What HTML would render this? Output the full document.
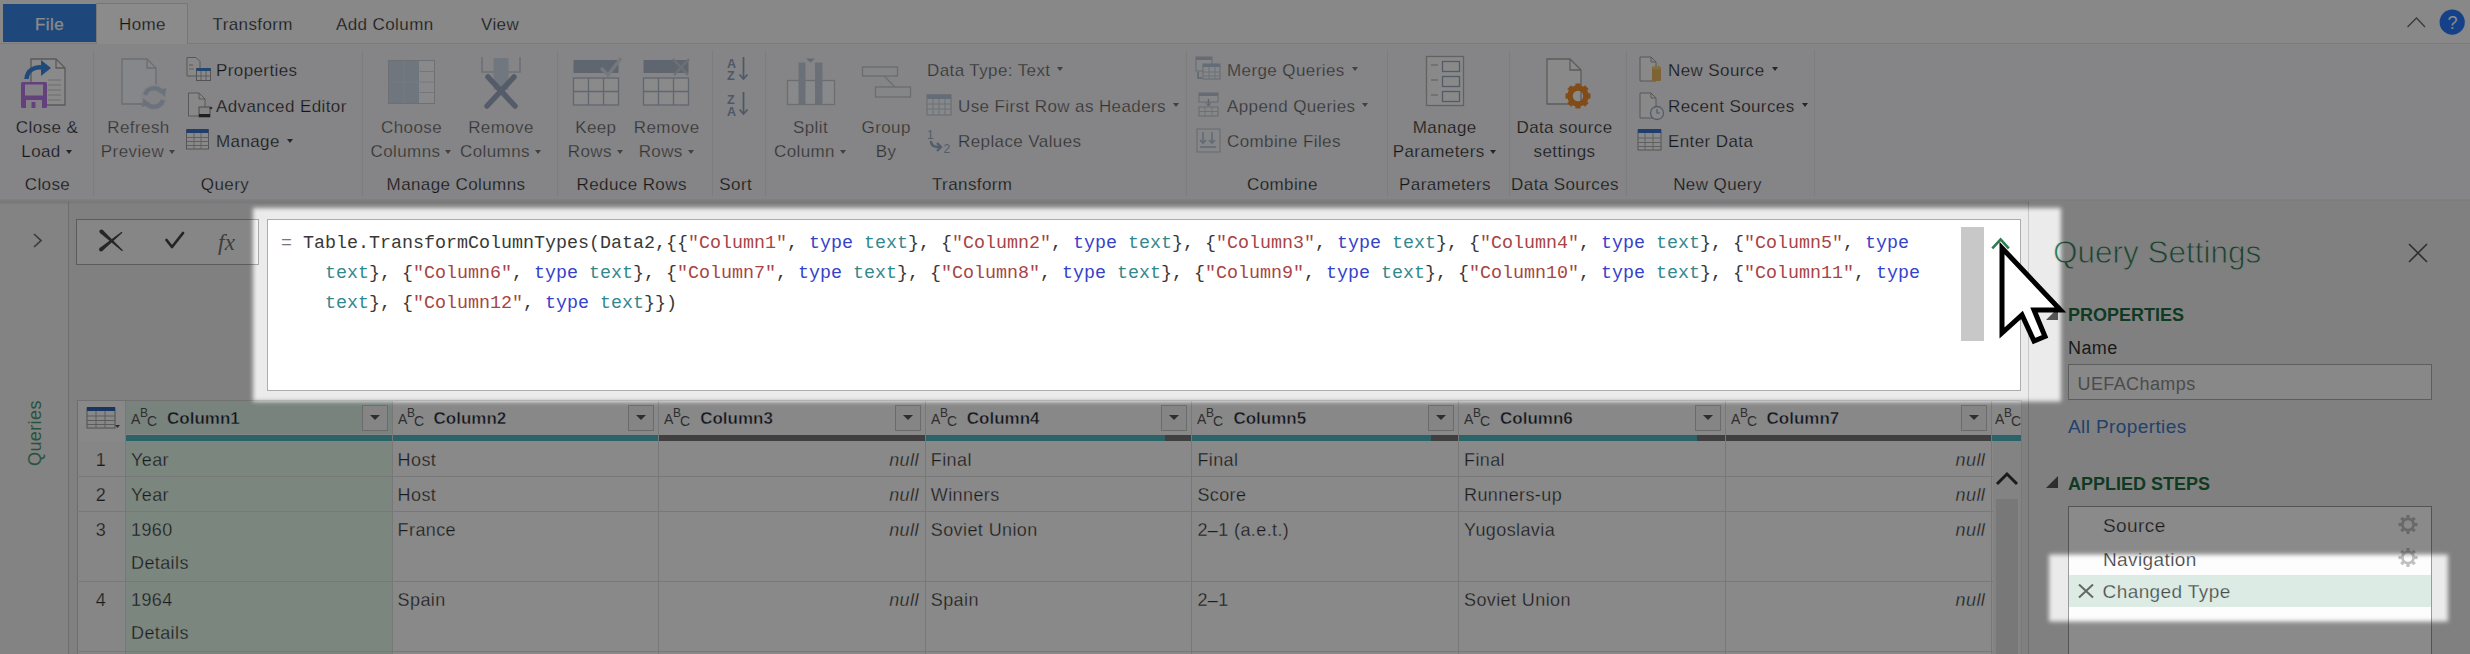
<!DOCTYPE html><html><head><meta charset="utf-8"><style>
html,body{margin:0;padding:0;}
body{width:2470px;height:654px;overflow:hidden;position:relative;background:#f6f6f6;font-family:"Liberation Sans",sans-serif;}
.t{position:absolute;white-space:pre;letter-spacing:0.4px;}
.mono{letter-spacing:0;}
.r{position:absolute;}
.mono{font-family:"Liberation Mono",monospace;}
</style></head><body>
<div class="r" style="left:0px;top:0px;width:2470px;height:44px;background:#f9f9f9;"></div>
<div class="r" style="left:0px;top:43px;width:2470px;height:1px;background:#e2e2e2;"></div>
<div class="r" style="left:3px;top:4px;width:93px;height:38px;background:rgb(55,130,225);"></div>
<div class="t" style="left:-450.5px;width:1000px;text-align:center;top:16.1px;font-size:17px;line-height:17px;color:#ffffff;font-weight:normal;font-style:normal;-webkit-text-stroke:0.25px #f9f9f9;">File</div>
<div class="r" style="left:96px;top:3px;width:92px;height:41px;background:#ffffff;border:1px solid #dadada;box-sizing:border-box;border-bottom:none;"></div>
<div class="t" style="left:119.0px;top:16.1px;font-size:17px;line-height:17px;color:#282828;font-weight:normal;font-style:normal;-webkit-text-stroke:0.25px #f9f9f9;">Home</div>
<div class="t" style="left:212.5px;top:16.1px;font-size:17px;line-height:17px;color:#282828;font-weight:normal;font-style:normal;-webkit-text-stroke:0.25px #f9f9f9;">Transform</div>
<div class="t" style="left:336.0px;top:16.1px;font-size:17px;line-height:17px;color:#282828;font-weight:normal;font-style:normal;-webkit-text-stroke:0.25px #f9f9f9;">Add Column</div>
<div class="t" style="left:481.0px;top:16.1px;font-size:17px;line-height:17px;color:#282828;font-weight:normal;font-style:normal;-webkit-text-stroke:0.25px #f9f9f9;">View</div>
<svg class="r" style="left:2404px;top:14px;" width="24" height="16" viewBox="0 0 24 16"><polyline points="3.5,13 12.5,4 21,13" fill="none" stroke="#6a6a6a" stroke-width="1.3"/></svg>
<svg class="r" style="left:2438px;top:8px;" width="29" height="29" viewBox="0 0 29 29"><circle cx="14.2" cy="14.2" r="12.6" fill="rgb(40,120,250)"/><text x="14.4" y="20.8" font-family="Liberation Sans" font-size="18" fill="#fff" text-anchor="middle">?</text></svg>
<div class="r" style="left:0px;top:44px;width:2470px;height:157px;background:#f4f4f8;"></div>
<div class="r" style="left:93px;top:50px;width:1px;height:146px;background:#e6e6e6;"></div>
<div class="r" style="left:362px;top:50px;width:1px;height:146px;background:#e6e6e6;"></div>
<div class="r" style="left:556.5px;top:50px;width:1.0px;height:146px;background:#e6e6e6;"></div>
<div class="r" style="left:712px;top:50px;width:1px;height:146px;background:#e6e6e6;"></div>
<div class="r" style="left:764.5px;top:50px;width:1.0px;height:146px;background:#e6e6e6;"></div>
<div class="r" style="left:1185.5px;top:50px;width:1.0px;height:146px;background:#e6e6e6;"></div>
<div class="r" style="left:1386.5px;top:50px;width:1.0px;height:146px;background:#e6e6e6;"></div>
<div class="r" style="left:1509px;top:50px;width:1px;height:146px;background:#e6e6e6;"></div>
<div class="r" style="left:1625.5px;top:50px;width:1.0px;height:146px;background:#e6e6e6;"></div>
<div class="r" style="left:1814px;top:50px;width:1px;height:146px;background:#e6e6e6;"></div>
<div class="t" style="left:-452.5px;width:1000px;text-align:center;top:176.0px;font-size:17px;line-height:17px;color:#282828;font-weight:normal;font-style:normal;-webkit-text-stroke:0.25px #f4f4f8;">Close</div>
<div class="t" style="left:-275.0px;width:1000px;text-align:center;top:176.0px;font-size:17px;line-height:17px;color:#282828;font-weight:normal;font-style:normal;-webkit-text-stroke:0.25px #f4f4f8;">Query</div>
<div class="t" style="left:-44.0px;width:1000px;text-align:center;top:176.0px;font-size:17px;line-height:17px;color:#282828;font-weight:normal;font-style:normal;-webkit-text-stroke:0.25px #f4f4f8;">Manage Columns</div>
<div class="t" style="left:131.7px;width:1000px;text-align:center;top:176.0px;font-size:17px;line-height:17px;color:#282828;font-weight:normal;font-style:normal;-webkit-text-stroke:0.25px #f4f4f8;">Reduce Rows</div>
<div class="t" style="left:235.7px;width:1000px;text-align:center;top:176.0px;font-size:17px;line-height:17px;color:#282828;font-weight:normal;font-style:normal;-webkit-text-stroke:0.25px #f4f4f8;">Sort</div>
<div class="t" style="left:472.2px;width:1000px;text-align:center;top:176.0px;font-size:17px;line-height:17px;color:#282828;font-weight:normal;font-style:normal;-webkit-text-stroke:0.25px #f4f4f8;">Transform</div>
<div class="t" style="left:782.4px;width:1000px;text-align:center;top:176.0px;font-size:17px;line-height:17px;color:#282828;font-weight:normal;font-style:normal;-webkit-text-stroke:0.25px #f4f4f8;">Combine</div>
<div class="t" style="left:945.0px;width:1000px;text-align:center;top:176.0px;font-size:17px;line-height:17px;color:#282828;font-weight:normal;font-style:normal;-webkit-text-stroke:0.25px #f4f4f8;">Parameters</div>
<div class="t" style="left:1065.0px;width:1000px;text-align:center;top:176.0px;font-size:17px;line-height:17px;color:#282828;font-weight:normal;font-style:normal;-webkit-text-stroke:0.25px #f4f4f8;">Data Sources</div>
<div class="t" style="left:1217.5px;width:1000px;text-align:center;top:176.0px;font-size:17px;line-height:17px;color:#282828;font-weight:normal;font-style:normal;-webkit-text-stroke:0.25px #f4f4f8;">New Query</div>
<div class="t" style="left:-453.0px;width:1000px;text-align:center;top:118.6px;font-size:17px;line-height:17px;color:#282828;font-weight:normal;font-style:normal;-webkit-text-stroke:0.25px #f4f4f8;">Close &</div>
<div class="t" style="left:-459.0px;width:1000px;text-align:center;top:143.1px;font-size:17px;line-height:17px;color:#282828;font-weight:normal;font-style:normal;-webkit-text-stroke:0.25px #f4f4f8;">Load</div>
<div class="r" style="left:65.70625px;top:149.5px;width:0;height:0;border-left:3.5px solid transparent;border-right:3.5px solid transparent;border-top:4px solid #444;"></div>
<div class="t" style="left:-361.5px;width:1000px;text-align:center;top:118.6px;font-size:17px;line-height:17px;color:#5c5c5c;font-weight:normal;font-style:normal;-webkit-text-stroke:0.25px #f4f4f8;">Refresh</div>
<div class="t" style="left:-367.5px;width:1000px;text-align:center;top:143.1px;font-size:17px;line-height:17px;color:#5c5c5c;font-weight:normal;font-style:normal;-webkit-text-stroke:0.25px #f4f4f8;">Preview</div>
<div class="r" style="left:169.134375px;top:149.5px;width:0;height:0;border-left:3.5px solid transparent;border-right:3.5px solid transparent;border-top:4px solid #777;"></div>
<div class="t" style="left:-88.5px;width:1000px;text-align:center;top:118.6px;font-size:17px;line-height:17px;color:#5c5c5c;font-weight:normal;font-style:normal;-webkit-text-stroke:0.25px #f4f4f8;">Choose</div>
<div class="t" style="left:-94.5px;width:1000px;text-align:center;top:143.1px;font-size:17px;line-height:17px;color:#5c5c5c;font-weight:normal;font-style:normal;-webkit-text-stroke:0.25px #f4f4f8;">Columns</div>
<div class="r" style="left:445.4390625px;top:149.5px;width:0;height:0;border-left:3.5px solid transparent;border-right:3.5px solid transparent;border-top:4px solid #777;"></div>
<div class="t" style="left:1.0px;width:1000px;text-align:center;top:118.6px;font-size:17px;line-height:17px;color:#5c5c5c;font-weight:normal;font-style:normal;-webkit-text-stroke:0.25px #f4f4f8;">Remove</div>
<div class="t" style="left:-5.0px;width:1000px;text-align:center;top:143.1px;font-size:17px;line-height:17px;color:#5c5c5c;font-weight:normal;font-style:normal;-webkit-text-stroke:0.25px #f4f4f8;">Columns</div>
<div class="r" style="left:534.9390625px;top:149.5px;width:0;height:0;border-left:3.5px solid transparent;border-right:3.5px solid transparent;border-top:4px solid #777;"></div>
<div class="t" style="left:95.8px;width:1000px;text-align:center;top:118.6px;font-size:17px;line-height:17px;color:#5c5c5c;font-weight:normal;font-style:normal;-webkit-text-stroke:0.25px #f4f4f8;">Keep</div>
<div class="t" style="left:89.8px;width:1000px;text-align:center;top:143.1px;font-size:17px;line-height:17px;color:#5c5c5c;font-weight:normal;font-style:normal;-webkit-text-stroke:0.25px #f4f4f8;">Rows</div>
<div class="r" style="left:616.8578124999999px;top:149.5px;width:0;height:0;border-left:3.5px solid transparent;border-right:3.5px solid transparent;border-top:4px solid #777;"></div>
<div class="t" style="left:166.7px;width:1000px;text-align:center;top:118.6px;font-size:17px;line-height:17px;color:#5c5c5c;font-weight:normal;font-style:normal;-webkit-text-stroke:0.25px #f4f4f8;">Remove</div>
<div class="t" style="left:160.7px;width:1000px;text-align:center;top:143.1px;font-size:17px;line-height:17px;color:#5c5c5c;font-weight:normal;font-style:normal;-webkit-text-stroke:0.25px #f4f4f8;">Rows</div>
<div class="r" style="left:687.7578125px;top:149.5px;width:0;height:0;border-left:3.5px solid transparent;border-right:3.5px solid transparent;border-top:4px solid #777;"></div>
<div class="t" style="left:310.5px;width:1000px;text-align:center;top:118.6px;font-size:17px;line-height:17px;color:#5c5c5c;font-weight:normal;font-style:normal;-webkit-text-stroke:0.25px #f4f4f8;">Split</div>
<div class="t" style="left:304.5px;width:1000px;text-align:center;top:143.1px;font-size:17px;line-height:17px;color:#5c5c5c;font-weight:normal;font-style:normal;-webkit-text-stroke:0.25px #f4f4f8;">Column</div>
<div class="r" style="left:839.9890625px;top:149.5px;width:0;height:0;border-left:3.5px solid transparent;border-right:3.5px solid transparent;border-top:4px solid #777;"></div>
<div class="t" style="left:386.2px;width:1000px;text-align:center;top:118.6px;font-size:17px;line-height:17px;color:#5c5c5c;font-weight:normal;font-style:normal;-webkit-text-stroke:0.25px #f4f4f8;">Group</div>
<div class="t" style="left:386.2px;width:1000px;text-align:center;top:143.1px;font-size:17px;line-height:17px;color:#5c5c5c;font-weight:normal;font-style:normal;-webkit-text-stroke:0.25px #f4f4f8;">By</div>
<div class="t" style="left:944.7px;width:1000px;text-align:center;top:118.6px;font-size:17px;line-height:17px;color:#282828;font-weight:normal;font-style:normal;-webkit-text-stroke:0.25px #f4f4f8;">Manage</div>
<div class="t" style="left:938.7px;width:1000px;text-align:center;top:143.1px;font-size:17px;line-height:17px;color:#282828;font-weight:normal;font-style:normal;-webkit-text-stroke:0.25px #f4f4f8;">Parameters</div>
<div class="r" style="left:1489.621875px;top:149.5px;width:0;height:0;border-left:3.5px solid transparent;border-right:3.5px solid transparent;border-top:4px solid #444;"></div>
<div class="t" style="left:1064.5px;width:1000px;text-align:center;top:118.6px;font-size:17px;line-height:17px;color:#282828;font-weight:normal;font-style:normal;-webkit-text-stroke:0.25px #f4f4f8;">Data source</div>
<div class="t" style="left:1064.5px;width:1000px;text-align:center;top:143.1px;font-size:17px;line-height:17px;color:#282828;font-weight:normal;font-style:normal;-webkit-text-stroke:0.25px #f4f4f8;">settings</div>
<div class="t" style="left:216.0px;top:61.6px;font-size:17px;line-height:17px;color:#282828;font-weight:normal;font-style:normal;-webkit-text-stroke:0.25px #f4f4f8;">Properties</div>
<div class="t" style="left:216.0px;top:97.6px;font-size:17px;line-height:17px;color:#282828;font-weight:normal;font-style:normal;-webkit-text-stroke:0.25px #f4f4f8;">Advanced Editor</div>
<div class="t" style="left:216.0px;top:133.1px;font-size:17px;line-height:17px;color:#282828;font-weight:normal;font-style:normal;-webkit-text-stroke:0.25px #f4f4f8;">Manage</div>
<div class="r" style="left:286.821875px;top:138.5px;width:0;height:0;border-left:3.5px solid transparent;border-right:3.5px solid transparent;border-top:4px solid #444;"></div>
<div class="t" style="left:927.0px;top:61.6px;font-size:17px;line-height:17px;color:#5c5c5c;font-weight:normal;font-style:normal;-webkit-text-stroke:0.25px #f4f4f8;">Data Type: Text</div>
<div class="r" style="left:1057.46875px;top:67px;width:0;height:0;border-left:3.5px solid transparent;border-right:3.5px solid transparent;border-top:4px solid #777;"></div>
<div class="t" style="left:958.0px;top:97.6px;font-size:17px;line-height:17px;color:#5c5c5c;font-weight:normal;font-style:normal;-webkit-text-stroke:0.25px #f4f4f8;">Use First Row as Headers</div>
<div class="r" style="left:1172.975px;top:103px;width:0;height:0;border-left:3.5px solid transparent;border-right:3.5px solid transparent;border-top:4px solid #777;"></div>
<div class="t" style="left:958.0px;top:133.1px;font-size:17px;line-height:17px;color:#5c5c5c;font-weight:normal;font-style:normal;-webkit-text-stroke:0.25px #f4f4f8;">Replace Values</div>
<div class="t" style="left:1227.0px;top:61.6px;font-size:17px;line-height:17px;color:#5c5c5c;font-weight:normal;font-style:normal;-webkit-text-stroke:0.25px #f4f4f8;">Merge Queries</div>
<div class="r" style="left:1351.60625px;top:67px;width:0;height:0;border-left:3.5px solid transparent;border-right:3.5px solid transparent;border-top:4px solid #777;"></div>
<div class="t" style="left:1227.0px;top:97.6px;font-size:17px;line-height:17px;color:#5c5c5c;font-weight:normal;font-style:normal;-webkit-text-stroke:0.25px #f4f4f8;">Append Queries</div>
<div class="r" style="left:1362.44375px;top:103px;width:0;height:0;border-left:3.5px solid transparent;border-right:3.5px solid transparent;border-top:4px solid #777;"></div>
<div class="t" style="left:1227.0px;top:133.1px;font-size:17px;line-height:17px;color:#5c5c5c;font-weight:normal;font-style:normal;-webkit-text-stroke:0.25px #f4f4f8;">Combine Files</div>
<div class="t" style="left:1668.0px;top:61.6px;font-size:17px;line-height:17px;color:#282828;font-weight:normal;font-style:normal;-webkit-text-stroke:0.25px #f4f4f8;">New Source</div>
<div class="r" style="left:1771.59375px;top:67px;width:0;height:0;border-left:3.5px solid transparent;border-right:3.5px solid transparent;border-top:4px solid #444;"></div>
<div class="t" style="left:1668.0px;top:97.6px;font-size:17px;line-height:17px;color:#282828;font-weight:normal;font-style:normal;-webkit-text-stroke:0.25px #f4f4f8;">Recent Sources</div>
<div class="r" style="left:1801.5375px;top:103px;width:0;height:0;border-left:3.5px solid transparent;border-right:3.5px solid transparent;border-top:4px solid #444;"></div>
<div class="t" style="left:1668.0px;top:133.1px;font-size:17px;line-height:17px;color:#282828;font-weight:normal;font-style:normal;-webkit-text-stroke:0.25px #f4f4f8;">Enter Data</div>
<svg class="r" style="left:18px;top:56px;" width="50" height="54" viewBox="0 0 50 54">
<path d="M13 3 H38 L47 12 V49 H13 Z" fill="#fdfdfd" stroke="#a4a4a4" stroke-width="1.3"/>
<path d="M38 3 V12 H47" fill="none" stroke="#a4a4a4" stroke-width="1.3"/>
<g stroke="#c4c4c4" stroke-width="1"><line x1="30" y1="24" x2="43" y2="24"/><line x1="30" y1="29" x2="43" y2="29"/><line x1="30" y1="34" x2="43" y2="34"/><line x1="30" y1="39" x2="43" y2="39"/><line x1="30" y1="44" x2="43" y2="44"/></g>
<path d="M8.5 23 C9 14 17 10 25 11.5" fill="none" stroke="#3c88e0" stroke-width="4.5"/>
<path d="M23 4 L33 12 L23 20 Z" fill="#3c88e0"/>
<rect x="3" y="26" width="26" height="26" rx="1.5" fill="#b878e6"/>
<rect x="7" y="28.5" width="18" height="11" fill="#f4eef8"/>
<rect x="8" y="44" width="16" height="8" fill="#f4eef8"/><rect x="13.5" y="46" width="4" height="6" fill="#b878e6"/>
</svg>
<svg class="r" style="left:118px;top:56px;" width="52" height="56" viewBox="0 0 52 56">
<path d="M4 3 H29 L38 12 V48 H4 Z" fill="#f4f8fd" stroke="#c4c8ce" stroke-width="1.3"/>
<path d="M29 3 V12 H38" fill="none" stroke="#c4c8ce" stroke-width="1.3"/>
<circle cx="36" cy="41.5" r="13" fill="#f0f0f4"/>
<path d="M27 39 A9.5 9.5 0 0 1 44 36.5" fill="none" stroke="#c4d2e6" stroke-width="4.5"/>
<path d="M40 34 L48.5 32 L46.5 41 Z" fill="#c4d2e6"/>
<path d="M45 44 A9.5 9.5 0 0 1 28 46.5" fill="none" stroke="#c4d2e6" stroke-width="4.5"/>
<path d="M32 49 L23.5 51 L25.5 42 Z" fill="#c4d2e6"/>
</svg>
<svg class="r" style="left:184px;top:55px;" width="30" height="28" viewBox="0 0 30 28"><path d="M3 2.5 H12 L16 6.5 V21 H3 Z" fill="#fafafa" stroke="#a0a0a0"/><line x1="5" y1="10" x2="9" y2="10" stroke="#d49090"/><line x1="5" y1="14" x2="10" y2="14" stroke="#b0b0b0"/>
<rect x="12.5" y="13.5" width="14" height="12" fill="#fcfcfc" stroke="#9a9a9a"/><rect x="12.5" y="13" width="14" height="3" fill="#3f7fd0"/><line x1="17" y1="16" x2="17" y2="25.5" stroke="#aaa"/><line x1="22" y1="16" x2="22" y2="25.5" stroke="#aaa"/><line x1="12.5" y1="21" x2="26.5" y2="21" stroke="#aaa"/></svg>
<svg class="r" style="left:186px;top:91px;" width="28" height="28" viewBox="0 0 28 28"><path d="M2.5 2 H13 L19 8 V25 H2.5 Z" fill="#fafafa" stroke="#a0a0a0"/><path d="M13 2 V8 H19" fill="none" stroke="#a0a0a0"/><rect x="13" y="16" width="11" height="10" fill="#f2f2f2" stroke="#8a8a8a"/><rect x="13" y="23" width="11" height="3" fill="#3a3a3a"/><circle cx="25" cy="17" r="1.3" fill="#555"/></svg>
<svg class="r" style="left:185px;top:127px;" width="26" height="25" viewBox="0 0 26 25"><rect x="1.5" y="3" width="22" height="19" fill="#fcfcfc" stroke="#9a9a9a"/><rect x="1.5" y="2" width="22" height="4" fill="#3a72c8"/>
<g stroke="#b0b0b0" stroke-width="1"><line x1="9" y1="6" x2="9" y2="22"/><line x1="16" y1="6" x2="16" y2="22"/><line x1="1.5" y1="10.5" x2="23.5" y2="10.5"/><line x1="1.5" y1="14.5" x2="23.5" y2="14.5"/><line x1="1.5" y1="18.5" x2="23.5" y2="18.5"/></g></svg>
<svg class="r" style="left:386px;top:58px;" width="52" height="48" viewBox="0 0 52 48"><rect x="2.5" y="2.5" width="46" height="43" fill="#fbfcff" stroke="#c8cdd6"/><rect x="3" y="3" width="30" height="42" fill="#cdd8e8"/>
<g stroke="#d4dae4" stroke-width="1"><line x1="33.5" y1="13.5" x2="48.5" y2="13.5"/><line x1="33.5" y1="24" x2="48.5" y2="24"/><line x1="33.5" y1="34.5" x2="48.5" y2="34.5"/><line x1="3" y1="24" x2="33" y2="24" stroke="#d8e2ee"/><line x1="18" y1="3" x2="18" y2="45" stroke="#d8e2ee"/></g></svg>
<svg class="r" style="left:478px;top:55px;" width="46" height="56" viewBox="0 0 46 56"><path d="M4 2 V17 H42 V2" fill="none" stroke="#c8ccd2" stroke-width="1.6"/><rect x="15.5" y="3" width="15" height="32" fill="#d0dae8"/>
<path d="M9 51 L36 22 M10 22 L37 51" stroke="#9aa8c0" stroke-width="5.5" stroke-linecap="round"/></svg>
<svg class="r" style="left:570px;top:55px;" width="56" height="54" viewBox="0 0 56 54"><rect x="3.5" y="23" width="45" height="27" fill="#fdfdff" stroke="#b4bccc" stroke-width="1.3"/><rect x="3.5" y="5" width="45" height="13" fill="#b0bccc"/>
<g stroke="#b4bccc" stroke-width="1.3"><line x1="18.5" y1="23" x2="18.5" y2="50"/><line x1="33.5" y1="23" x2="33.5" y2="50"/><line x1="3.5" y1="36.5" x2="48.5" y2="36.5"/></g>
<path d="M31 13 L38 20 L51 3" fill="none" stroke="#d8dde6" stroke-width="3.2"/></svg>
<svg class="r" style="left:640px;top:55px;" width="56" height="54" viewBox="0 0 56 54"><rect x="3.5" y="23" width="45" height="27" fill="#fdfdff" stroke="#b4bccc" stroke-width="1.3"/><rect x="3.5" y="5" width="45" height="13" fill="#b0bccc"/>
<g stroke="#b4bccc" stroke-width="1.3"><line x1="18.5" y1="23" x2="18.5" y2="50"/><line x1="33.5" y1="23" x2="33.5" y2="50"/><line x1="3.5" y1="36.5" x2="48.5" y2="36.5"/></g>
<path d="M33 4 L48 20 M49 4 L34 20" stroke="#c8ced8" stroke-width="2.4"/></svg>
<svg class="r" style="left:724px;top:55px;" width="30" height="62" viewBox="0 0 30 62"><g font-family="Liberation Sans" font-size="12.5" font-weight="bold" fill="#90a2bc"><text x="3" y="12.5">A</text><text x="3" y="25">Z</text><text x="3" y="48.5">Z</text><text x="3" y="61">A</text></g>
<g stroke="#90a2bc" stroke-width="1.8" fill="none"><line x1="19.5" y1="2" x2="19.5" y2="24"/><polyline points="15.5,19.5 19.5,24 23.5,19.5"/><line x1="19.5" y1="37" x2="19.5" y2="59"/><polyline points="15.5,54.5 19.5,59 23.5,54.5"/></g></svg>
<svg class="r" style="left:784px;top:56px;" width="54" height="52" viewBox="0 0 54 52"><rect x="3.5" y="24.5" width="47" height="24" fill="#fafbfd" stroke="#c4c8d0" stroke-width="1.3"/><rect x="14.5" y="6.5" width="7" height="42" fill="#c4cedc"/><rect x="31" y="6.5" width="7.5" height="42" fill="#c4cedc"/>
<path d="M22 2.5 L31 2.5 L26.5 6.5 Z" fill="#b8c4d4"/></svg>
<svg class="r" style="left:860px;top:64px;" width="54" height="36" viewBox="0 0 54 36"><rect x="2.5" y="3" width="35" height="9" fill="#f4f6fa" stroke="#c0c6d0" stroke-width="1.3"/><rect x="15.5" y="23" width="35" height="10" fill="#f4f6fa" stroke="#c0c6d0" stroke-width="1.3"/><line x1="24" y1="12" x2="35" y2="23" stroke="#c0c6d0" stroke-width="1.3"/></svg>
<svg class="r" style="left:925px;top:92px;" width="28" height="26" viewBox="0 0 28 26"><rect x="2" y="3" width="24" height="20" fill="#f8fafd" stroke="#b8c2d0"/><rect x="2" y="2.5" width="24" height="4.5" fill="#b8c6da"/>
<g stroke="#c6d0dc"><line x1="8" y1="7" x2="8" y2="23"/><line x1="14" y1="7" x2="14" y2="23"/><line x1="20" y1="7" x2="20" y2="23"/><line x1="2" y1="12" x2="26" y2="12"/><line x1="2" y1="17" x2="26" y2="17"/></g></svg>
<svg class="r" style="left:925px;top:128px;" width="30" height="28" viewBox="0 0 30 28"><g font-family="Liberation Sans" font-size="12" fill="#98acc6"><text x="2" y="11">1</text><text x="18.5" y="25">2</text></g><path d="M6 13 C6 18 9 19 16 19" fill="none" stroke="#98acc6" stroke-width="2.4"/><polyline points="12,15 16,19 12,23" fill="none" stroke="#98acc6" stroke-width="2.4"/></svg>
<svg class="r" style="left:1193px;top:55px;" width="30" height="28" viewBox="0 0 30 28"><rect x="3" y="2" width="16" height="14" fill="#f6f8fb" stroke="#b8c0cc"/><rect x="3" y="2" width="16" height="3" fill="#b8c6da"/><rect x="10" y="9" width="17" height="15" fill="#f6f8fb" stroke="#b8c0cc"/><rect x="10" y="9" width="17" height="3" fill="#b8c6da"/>
<g stroke="#c8d0da"><line x1="16" y1="12" x2="16" y2="24"/><line x1="22" y1="12" x2="22" y2="24"/><line x1="10" y1="17" x2="27" y2="17"/><line x1="10" y1="21" x2="27" y2="21"/></g><path d="M5 17 V23 H9" fill="none" stroke="#a8bcd4" stroke-width="1.5"/></svg>
<svg class="r" style="left:1197px;top:91px;" width="24" height="28" viewBox="0 0 24 28"><rect x="2" y="2" width="19" height="9" fill="#f6f8fb" stroke="#b8c0cc"/><rect x="2" y="2" width="19" height="3" fill="#b8c6da"/><rect x="2" y="16" width="19" height="9" fill="#f6f8fb" stroke="#b8c0cc"/>
<g stroke="#c8d0da"><line x1="8" y1="16" x2="8" y2="25"/><line x1="15" y1="16" x2="15" y2="25"/><line x1="2" y1="20.5" x2="21" y2="20.5"/></g><path d="M11.5 8 V15" stroke="#a8bcd4" stroke-width="1.5"/><polyline points="9,12 11.5,15 14,12" fill="none" stroke="#a8bcd4"/></svg>
<svg class="r" style="left:1195px;top:127px;" width="28" height="28" viewBox="0 0 28 28"><rect x="2" y="2" width="23" height="23" fill="#f4f6fa" stroke="#b8c0cc"/><g stroke="#b4c2d6" stroke-width="1.6" fill="none"><line x1="8" y1="5" x2="8" y2="16"/><polyline points="5,13 8,16 11,13"/><line x1="17" y1="5" x2="17" y2="16"/><polyline points="14,13 17,16 20,13"/><line x1="5" y1="20" x2="21" y2="20"/></g></svg>
<svg class="r" style="left:1424px;top:54px;" width="44" height="54" viewBox="0 0 44 54"><rect x="2.5" y="2.5" width="37" height="49" fill="#fbfbfb" stroke="#b4b4b4" stroke-width="1.3"/>
<g fill="#fbfcfe" stroke="#98a8c0" stroke-width="1.3"><rect x="18.5" y="7.5" width="17" height="10"/><rect x="18.5" y="22.5" width="17" height="10"/><rect x="18.5" y="37.5" width="17" height="10"/></g>
<g stroke="#b8b8b8" stroke-width="1.2"><line x1="7" y1="11" x2="14" y2="11"/><line x1="7" y1="26" x2="14" y2="26"/><line x1="7" y1="41" x2="14" y2="41"/></g></svg>
<svg class="r" style="left:1544px;top:56px;" width="50" height="54" viewBox="0 0 50 54"><path d="M3 3 H26 L37 14 V48 H3 Z" fill="#fbfbfb" stroke="#a8a8a8" stroke-width="1.3"/><path d="M26 3 V14 H37" fill="none" stroke="#a8a8a8" stroke-width="1.3"/>
<g transform="translate(34,40)"><circle r="8" fill="none" stroke="#ec8c2c" stroke-width="5.5"/><g fill="#ec8c2c"><rect x="-2.6" y="-12.5" width="5.2" height="6" transform="rotate(0)"/><rect x="-2.6" y="-12.5" width="5.2" height="6" transform="rotate(45)"/><rect x="-2.6" y="-12.5" width="5.2" height="6" transform="rotate(90)"/><rect x="-2.6" y="-12.5" width="5.2" height="6" transform="rotate(135)"/><rect x="-2.6" y="-12.5" width="5.2" height="6" transform="rotate(180)"/><rect x="-2.6" y="-12.5" width="5.2" height="6" transform="rotate(225)"/><rect x="-2.6" y="-12.5" width="5.2" height="6" transform="rotate(270)"/><rect x="-2.6" y="-12.5" width="5.2" height="6" transform="rotate(315)"/></g></g></svg>
<svg class="r" style="left:1637px;top:55px;" width="28" height="30" viewBox="0 0 28 30"><path d="M3 2 H14 L19 7 V26 H3 Z" fill="#fbfbfb" stroke="#a0a0a0"/><path d="M14 2 V7 H19" fill="none" stroke="#a0a0a0"/><rect x="15" y="12" width="9" height="14" rx="1" fill="#e8b860"/><ellipse cx="19.5" cy="12.5" rx="4.5" ry="1.8" fill="#f3cf7a"/></svg>
<svg class="r" style="left:1637px;top:91px;" width="30" height="32" viewBox="0 0 30 32"><path d="M3 2 H14 L19 7 V27 H3 Z" fill="#fbfbfb" stroke="#a0a0a0"/><path d="M14 2 V7 H19" fill="none" stroke="#a0a0a0"/><circle cx="20" cy="22" r="6.5" fill="#fbfbfb" stroke="#98a8c0" stroke-width="1.3"/><path d="M20 18 V22 H23" fill="none" stroke="#98a8c0" stroke-width="1.2"/></svg>
<svg class="r" style="left:1636px;top:127px;" width="28" height="26" viewBox="0 0 28 26"><rect x="2" y="3" width="23" height="20" fill="#fcfcfc" stroke="#9a9a9a"/><rect x="2" y="2" width="23" height="4" fill="#3a72c8"/>
<g stroke="#b0b0b0"><line x1="9" y1="6" x2="9" y2="23"/><line x1="17" y1="6" x2="17" y2="23"/><line x1="2" y1="11" x2="25" y2="11"/><line x1="2" y1="15.5" x2="25" y2="15.5"/><line x1="2" y1="19.5" x2="25" y2="19.5"/></g></svg>
<div class="r" style="left:0px;top:201px;width:2470px;height:453px;background:#ebebeb;"></div>
<div class="r" style="left:0px;top:201px;width:68px;height:453px;background:#f0f0f0;"></div>
<div class="r" style="left:0px;top:199px;width:2470px;height:5px;background:linear-gradient(#ededf1, #dedede 55%, #e6e6e6);"></div>
<div class="r" style="left:68px;top:201px;width:1px;height:453px;background:#c8c8c8;"></div>
<svg class="r" style="left:30px;top:232px;" width="16" height="18" viewBox="0 0 16 18"><polyline points="4,2 11,8.5 4,15" fill="none" stroke="#6a6a6a" stroke-width="1.7"/></svg>
<div class="t" style="left:0;top:0;font-size:18px;line-height:18px;color:#4a9a70;transform-origin:0 0;transform:translate(26px,466px) rotate(-90deg);">Queries</div>
<div class="r" style="left:76px;top:219px;width:183px;height:46px;background:#f6f6f6;border:1.5px solid #a8a8a8;box-sizing:border-box;"></div>
<svg class="r" style="left:96px;top:226px;" width="32" height="30" viewBox="0 0 32 30"><g fill="#474747"><path d="M4.05 6.88 L6.75 3.92 L26.9 24.26 L26.1 25.14 Z"/><circle cx="5.4" cy="5.4" r="2"/><path d="M6.27 25.04 L3.73 21.96 L25.62 5.74 L26.38 6.66 Z"/><circle cx="5" cy="23.5" r="2"/></g></svg>
<svg class="r" style="left:164px;top:230px;" width="22" height="20" viewBox="0 0 22 20"><polyline points="2.5,10 8,17 19,3" fill="none" stroke="#444" stroke-width="2.8" stroke-linecap="round" stroke-linejoin="round"/></svg>
<div class="t" style="left:218.0px;top:231.4px;font-size:23px;line-height:23px;color:#707070;font-weight:normal;font-style:italic;font-family:'Liberation Serif',serif;">fx</div>
<div class="r" style="left:77px;top:400px;width:1944px;height:34px;background:#f9f9f9;"></div>
<div class="r" style="left:125px;top:400px;width:266.6px;height:34px;background:#dff0e6;"></div>
<div class="r" style="left:77px;top:434px;width:1944px;height:7px;background:#f9f9f9;"></div>
<div class="r" style="left:77px;top:441px;width:1944px;height:213px;background:#fbfbfb;"></div>
<div class="r" style="left:77px;top:441px;width:48px;height:213px;background:#f6f6f6;"></div>
<div class="r" style="left:125px;top:441px;width:266.6px;height:213px;background:#e2f6ea;"></div>
<div class="r" style="left:125px;top:435px;width:266.6px;height:6px;background:#4eb8c0;"></div>
<div class="r" style="left:392.6px;top:435px;width:265.6px;height:6px;background:#4eb8c0;"></div>
<div class="r" style="left:659.2px;top:435px;width:265.5999999999999px;height:6px;background:#747474;"></div>
<div class="r" style="left:925.8px;top:435px;width:239.20000000000005px;height:6px;background:#4eb8c0;"></div>
<div class="r" style="left:1165px;top:435px;width:26.40000000000009px;height:6px;background:#747474;"></div>
<div class="r" style="left:1192.4px;top:435px;width:238.5999999999999px;height:6px;background:#4eb8c0;"></div>
<div class="r" style="left:1431px;top:435px;width:27px;height:6px;background:#747474;"></div>
<div class="r" style="left:1459px;top:435px;width:238px;height:6px;background:#4eb8c0;"></div>
<div class="r" style="left:1697px;top:435px;width:27.59999999999991px;height:6px;background:#747474;"></div>
<div class="r" style="left:1725.6px;top:435px;width:265.60000000000014px;height:6px;background:#747474;"></div>
<div class="r" style="left:1992.2px;top:435px;width:28.799999999999955px;height:6px;background:#4eb8c0;"></div>
<div class="r" style="left:77px;top:400px;width:1px;height:254px;background:#c8c8c8;"></div>
<div class="r" style="left:125px;top:400px;width:1px;height:254px;background:#dcdcdc;"></div>
<div class="r" style="left:391.6px;top:400px;width:1.0px;height:254px;background:#dcdcdc;"></div>
<div class="r" style="left:658.2px;top:400px;width:1.0px;height:254px;background:#dcdcdc;"></div>
<div class="r" style="left:924.8px;top:400px;width:1.0px;height:254px;background:#dcdcdc;"></div>
<div class="r" style="left:1191.4px;top:400px;width:1.0px;height:254px;background:#dcdcdc;"></div>
<div class="r" style="left:1458px;top:400px;width:1px;height:254px;background:#dcdcdc;"></div>
<div class="r" style="left:1724.6px;top:400px;width:1.0px;height:254px;background:#dcdcdc;"></div>
<div class="r" style="left:1991.2px;top:400px;width:1.0px;height:254px;background:#dcdcdc;"></div>
<div class="r" style="left:2021px;top:400px;width:1px;height:254px;background:#dcdcdc;"></div>
<div class="r" style="left:77px;top:476px;width:1944px;height:1px;background:#dcdcdc;"></div>
<div class="r" style="left:77px;top:511px;width:1944px;height:1px;background:#dcdcdc;"></div>
<div class="r" style="left:77px;top:581px;width:1944px;height:1px;background:#dcdcdc;"></div>
<div class="r" style="left:77px;top:651px;width:1944px;height:1px;background:#dcdcdc;"></div>
<div class="r" style="left:77px;top:400px;width:1944px;height:1px;background:#d0d0d0;"></div>
<svg class="r" style="left:85px;top:405px;" width="36" height="26" viewBox="0 0 36 26"><rect x="2" y="3" width="28" height="20" fill="#fafafa" stroke="#909090"/><rect x="2" y="2" width="28" height="4" fill="#2f62b8"/>
<g stroke="#a8a8a8"><line x1="11" y1="6" x2="11" y2="23"/><line x1="20" y1="6" x2="20" y2="23"/><line x1="2" y1="11" x2="30" y2="11"/><line x1="2" y1="15.5" x2="30" y2="15.5"/><line x1="2" y1="19.5" x2="30" y2="19.5"/></g><path d="M30 20 L35 20 L32.5 23 Z" fill="#555"/></svg>
<svg class="r" style="left:130px;top:405px;" width="28" height="24" viewBox="0 0 28 24"><g font-family="Liberation Sans" fill="#555"><text x="1" y="19" font-size="14">A</text><text x="10" y="12" font-size="12">B</text><text x="17" y="21" font-size="14">C</text></g></svg>
<div class="t" style="left:167.0px;top:409.6px;font-size:17px;line-height:17px;color:#1c2230;font-weight:bold;font-style:normal;letter-spacing:0;-webkit-text-stroke:0.45px #dff0e6;">Column1</div>
<div class="r" style="left:361.6px;top:404.5px;width:26.0px;height:26.0px;background:#f4f4f4;border:1px solid #c4c4c4;box-sizing:border-box;"></div>
<svg class="r" style="left:368.6px;top:414px;" width="12" height="8" viewBox="0 0 12 8"><path d="M1 1 L11 1 L6 6 Z" fill="#555"/></svg>
<svg class="r" style="left:396.6px;top:405px;" width="28" height="24" viewBox="0 0 28 24"><g font-family="Liberation Sans" fill="#555"><text x="1" y="19" font-size="14">A</text><text x="10" y="12" font-size="12">B</text><text x="17" y="21" font-size="14">C</text></g></svg>
<div class="t" style="left:433.6px;top:409.6px;font-size:17px;line-height:17px;color:#1c2230;font-weight:bold;font-style:normal;letter-spacing:0;-webkit-text-stroke:0.45px #f9f9f9;">Column2</div>
<div class="r" style="left:628.2px;top:404.5px;width:26.0px;height:26.0px;background:#f4f4f4;border:1px solid #c4c4c4;box-sizing:border-box;"></div>
<svg class="r" style="left:635.2px;top:414px;" width="12" height="8" viewBox="0 0 12 8"><path d="M1 1 L11 1 L6 6 Z" fill="#555"/></svg>
<svg class="r" style="left:663.2px;top:405px;" width="28" height="24" viewBox="0 0 28 24"><g font-family="Liberation Sans" fill="#555"><text x="1" y="19" font-size="14">A</text><text x="10" y="12" font-size="12">B</text><text x="17" y="21" font-size="14">C</text></g></svg>
<div class="t" style="left:700.2px;top:409.6px;font-size:17px;line-height:17px;color:#1c2230;font-weight:bold;font-style:normal;letter-spacing:0;-webkit-text-stroke:0.45px #f9f9f9;">Column3</div>
<div class="r" style="left:894.8px;top:404.5px;width:26.0px;height:26.0px;background:#f4f4f4;border:1px solid #c4c4c4;box-sizing:border-box;"></div>
<svg class="r" style="left:901.8px;top:414px;" width="12" height="8" viewBox="0 0 12 8"><path d="M1 1 L11 1 L6 6 Z" fill="#555"/></svg>
<svg class="r" style="left:929.8px;top:405px;" width="28" height="24" viewBox="0 0 28 24"><g font-family="Liberation Sans" fill="#555"><text x="1" y="19" font-size="14">A</text><text x="10" y="12" font-size="12">B</text><text x="17" y="21" font-size="14">C</text></g></svg>
<div class="t" style="left:966.8px;top:409.6px;font-size:17px;line-height:17px;color:#1c2230;font-weight:bold;font-style:normal;letter-spacing:0;-webkit-text-stroke:0.45px #f9f9f9;">Column4</div>
<div class="r" style="left:1161.4px;top:404.5px;width:26.0px;height:26.0px;background:#f4f4f4;border:1px solid #c4c4c4;box-sizing:border-box;"></div>
<svg class="r" style="left:1168.4px;top:414px;" width="12" height="8" viewBox="0 0 12 8"><path d="M1 1 L11 1 L6 6 Z" fill="#555"/></svg>
<svg class="r" style="left:1196.4px;top:405px;" width="28" height="24" viewBox="0 0 28 24"><g font-family="Liberation Sans" fill="#555"><text x="1" y="19" font-size="14">A</text><text x="10" y="12" font-size="12">B</text><text x="17" y="21" font-size="14">C</text></g></svg>
<div class="t" style="left:1233.4px;top:409.6px;font-size:17px;line-height:17px;color:#1c2230;font-weight:bold;font-style:normal;letter-spacing:0;-webkit-text-stroke:0.45px #f9f9f9;">Column5</div>
<div class="r" style="left:1428px;top:404.5px;width:26px;height:26.0px;background:#f4f4f4;border:1px solid #c4c4c4;box-sizing:border-box;"></div>
<svg class="r" style="left:1435px;top:414px;" width="12" height="8" viewBox="0 0 12 8"><path d="M1 1 L11 1 L6 6 Z" fill="#555"/></svg>
<svg class="r" style="left:1463px;top:405px;" width="28" height="24" viewBox="0 0 28 24"><g font-family="Liberation Sans" fill="#555"><text x="1" y="19" font-size="14">A</text><text x="10" y="12" font-size="12">B</text><text x="17" y="21" font-size="14">C</text></g></svg>
<div class="t" style="left:1500.0px;top:409.6px;font-size:17px;line-height:17px;color:#1c2230;font-weight:bold;font-style:normal;letter-spacing:0;-webkit-text-stroke:0.45px #f9f9f9;">Column6</div>
<div class="r" style="left:1694.6px;top:404.5px;width:26.0px;height:26.0px;background:#f4f4f4;border:1px solid #c4c4c4;box-sizing:border-box;"></div>
<svg class="r" style="left:1701.6px;top:414px;" width="12" height="8" viewBox="0 0 12 8"><path d="M1 1 L11 1 L6 6 Z" fill="#555"/></svg>
<svg class="r" style="left:1729.6px;top:405px;" width="28" height="24" viewBox="0 0 28 24"><g font-family="Liberation Sans" fill="#555"><text x="1" y="19" font-size="14">A</text><text x="10" y="12" font-size="12">B</text><text x="17" y="21" font-size="14">C</text></g></svg>
<div class="t" style="left:1766.6px;top:409.6px;font-size:17px;line-height:17px;color:#1c2230;font-weight:bold;font-style:normal;letter-spacing:0;-webkit-text-stroke:0.45px #f9f9f9;">Column7</div>
<div class="r" style="left:1961.2px;top:404.5px;width:26.0px;height:26.0px;background:#f4f4f4;border:1px solid #c4c4c4;box-sizing:border-box;"></div>
<svg class="r" style="left:1968.2px;top:414px;" width="12" height="8" viewBox="0 0 12 8"><path d="M1 1 L11 1 L6 6 Z" fill="#555"/></svg>
<svg class="r" style="left:1994.2px;top:405px;" width="28" height="24" viewBox="0 0 28 24"><g font-family="Liberation Sans" fill="#555"><text x="1" y="19" font-size="14">A</text><text x="10" y="12" font-size="12">B</text><text x="17" y="21" font-size="14">C</text></g></svg>
<div class="t" style="left:-399.0px;width:1000px;text-align:center;top:450.8px;font-size:18px;line-height:18px;color:#333;font-weight:normal;font-style:normal;-webkit-text-stroke:0.25px #f6f6f6;">1</div>
<div class="t" style="left:131.0px;top:450.8px;font-size:18px;line-height:18px;color:#303030;font-weight:normal;font-style:normal;-webkit-text-stroke:0.3px #e2f6ea;">Year</div>
<div class="t" style="left:397.6px;top:450.8px;font-size:18px;line-height:18px;color:#303030;font-weight:normal;font-style:normal;-webkit-text-stroke:0.3px #fbfbfb;">Host</div>
<div class="t" style="left:-81.2px;width:1000px;text-align:right;top:450.8px;font-size:18px;line-height:18px;color:#333;font-weight:normal;font-style:italic;-webkit-text-stroke:0.3px #fbfbfb;">null</div>
<div class="t" style="left:930.8px;top:450.8px;font-size:18px;line-height:18px;color:#303030;font-weight:normal;font-style:normal;-webkit-text-stroke:0.3px #fbfbfb;">Final</div>
<div class="t" style="left:1197.4px;top:450.8px;font-size:18px;line-height:18px;color:#303030;font-weight:normal;font-style:normal;-webkit-text-stroke:0.3px #fbfbfb;">Final</div>
<div class="t" style="left:1464.0px;top:450.8px;font-size:18px;line-height:18px;color:#303030;font-weight:normal;font-style:normal;-webkit-text-stroke:0.3px #fbfbfb;">Final</div>
<div class="t" style="left:985.2px;width:1000px;text-align:right;top:450.8px;font-size:18px;line-height:18px;color:#333;font-weight:normal;font-style:italic;-webkit-text-stroke:0.3px #fbfbfb;">null</div>
<div class="t" style="left:-399.0px;width:1000px;text-align:center;top:485.8px;font-size:18px;line-height:18px;color:#333;font-weight:normal;font-style:normal;-webkit-text-stroke:0.25px #f6f6f6;">2</div>
<div class="t" style="left:131.0px;top:485.8px;font-size:18px;line-height:18px;color:#303030;font-weight:normal;font-style:normal;-webkit-text-stroke:0.3px #e2f6ea;">Year</div>
<div class="t" style="left:397.6px;top:485.8px;font-size:18px;line-height:18px;color:#303030;font-weight:normal;font-style:normal;-webkit-text-stroke:0.3px #fbfbfb;">Host</div>
<div class="t" style="left:-81.2px;width:1000px;text-align:right;top:485.8px;font-size:18px;line-height:18px;color:#333;font-weight:normal;font-style:italic;-webkit-text-stroke:0.3px #fbfbfb;">null</div>
<div class="t" style="left:930.8px;top:485.8px;font-size:18px;line-height:18px;color:#303030;font-weight:normal;font-style:normal;-webkit-text-stroke:0.3px #fbfbfb;">Winners</div>
<div class="t" style="left:1197.4px;top:485.8px;font-size:18px;line-height:18px;color:#303030;font-weight:normal;font-style:normal;-webkit-text-stroke:0.3px #fbfbfb;">Score</div>
<div class="t" style="left:1464.0px;top:485.8px;font-size:18px;line-height:18px;color:#303030;font-weight:normal;font-style:normal;-webkit-text-stroke:0.3px #fbfbfb;">Runners-up</div>
<div class="t" style="left:985.2px;width:1000px;text-align:right;top:485.8px;font-size:18px;line-height:18px;color:#333;font-weight:normal;font-style:italic;-webkit-text-stroke:0.3px #fbfbfb;">null</div>
<div class="t" style="left:-399.0px;width:1000px;text-align:center;top:520.8px;font-size:18px;line-height:18px;color:#333;font-weight:normal;font-style:normal;-webkit-text-stroke:0.25px #f6f6f6;">3</div>
<div class="t" style="left:131.0px;top:520.8px;font-size:18px;line-height:18px;color:#303030;font-weight:normal;font-style:normal;-webkit-text-stroke:0.3px #e2f6ea;">1960</div>
<div class="t" style="left:131.0px;top:553.8px;font-size:18px;line-height:18px;color:#303030;font-weight:normal;font-style:normal;-webkit-text-stroke:0.3px #e2f6ea;">Details</div>
<div class="t" style="left:397.6px;top:520.8px;font-size:18px;line-height:18px;color:#303030;font-weight:normal;font-style:normal;-webkit-text-stroke:0.3px #fbfbfb;">France</div>
<div class="t" style="left:-81.2px;width:1000px;text-align:right;top:520.8px;font-size:18px;line-height:18px;color:#333;font-weight:normal;font-style:italic;-webkit-text-stroke:0.3px #fbfbfb;">null</div>
<div class="t" style="left:930.8px;top:520.8px;font-size:18px;line-height:18px;color:#303030;font-weight:normal;font-style:normal;-webkit-text-stroke:0.3px #fbfbfb;">Soviet Union</div>
<div class="t" style="left:1197.4px;top:520.8px;font-size:18px;line-height:18px;color:#303030;font-weight:normal;font-style:normal;-webkit-text-stroke:0.3px #fbfbfb;">2–1 (a.e.t.)</div>
<div class="t" style="left:1464.0px;top:520.8px;font-size:18px;line-height:18px;color:#303030;font-weight:normal;font-style:normal;-webkit-text-stroke:0.3px #fbfbfb;">Yugoslavia</div>
<div class="t" style="left:985.2px;width:1000px;text-align:right;top:520.8px;font-size:18px;line-height:18px;color:#333;font-weight:normal;font-style:italic;-webkit-text-stroke:0.3px #fbfbfb;">null</div>
<div class="t" style="left:-399.0px;width:1000px;text-align:center;top:590.8px;font-size:18px;line-height:18px;color:#333;font-weight:normal;font-style:normal;-webkit-text-stroke:0.25px #f6f6f6;">4</div>
<div class="t" style="left:131.0px;top:590.8px;font-size:18px;line-height:18px;color:#303030;font-weight:normal;font-style:normal;-webkit-text-stroke:0.3px #e2f6ea;">1964</div>
<div class="t" style="left:131.0px;top:623.8px;font-size:18px;line-height:18px;color:#303030;font-weight:normal;font-style:normal;-webkit-text-stroke:0.3px #e2f6ea;">Details</div>
<div class="t" style="left:397.6px;top:590.8px;font-size:18px;line-height:18px;color:#303030;font-weight:normal;font-style:normal;-webkit-text-stroke:0.3px #fbfbfb;">Spain</div>
<div class="t" style="left:-81.2px;width:1000px;text-align:right;top:590.8px;font-size:18px;line-height:18px;color:#333;font-weight:normal;font-style:italic;-webkit-text-stroke:0.3px #fbfbfb;">null</div>
<div class="t" style="left:930.8px;top:590.8px;font-size:18px;line-height:18px;color:#303030;font-weight:normal;font-style:normal;-webkit-text-stroke:0.3px #fbfbfb;">Spain</div>
<div class="t" style="left:1197.4px;top:590.8px;font-size:18px;line-height:18px;color:#303030;font-weight:normal;font-style:normal;-webkit-text-stroke:0.3px #fbfbfb;">2–1</div>
<div class="t" style="left:1464.0px;top:590.8px;font-size:18px;line-height:18px;color:#303030;font-weight:normal;font-style:normal;-webkit-text-stroke:0.3px #fbfbfb;">Soviet Union</div>
<div class="t" style="left:985.2px;width:1000px;text-align:right;top:590.8px;font-size:18px;line-height:18px;color:#333;font-weight:normal;font-style:italic;-webkit-text-stroke:0.3px #fbfbfb;">null</div>
<div class="r" style="left:1993px;top:441px;width:28px;height:213px;background:#f0f0f0;"></div>
<div class="r" style="left:1996px;top:499px;width:22px;height:155px;background:#dcdcdc;"></div>
<svg class="r" style="left:1994px;top:466px;" width="26" height="22" viewBox="0 0 26 22"><polyline points="3,18 13,8 23,18" fill="none" stroke="#333" stroke-width="3"/></svg>
<div class="r" style="left:2028px;top:201px;width:1px;height:453px;background:#c8c8c8;"></div>
<div class="r" style="left:2029px;top:201px;width:441px;height:453px;background:#ebebeb;"></div>
<div class="t" style="left:2053.0px;top:236.5px;font-size:31.5px;line-height:31.5px;color:#2f7a55;font-weight:normal;font-style:normal;letter-spacing:0;-webkit-text-stroke:0.8px #ebebeb;">Query Settings</div>
<svg class="r" style="left:2405px;top:240px;" width="26" height="26" viewBox="0 0 26 26"><path d="M4 4 L22 22 M22 4 L4 22" stroke="#555" stroke-width="1.6"/></svg>
<svg class="r" style="left:2044px;top:306px;" width="16" height="16" viewBox="0 0 16 16"><path d="M2 14 L14 14 L14 2 Z" fill="#555"/></svg>
<div class="t" style="left:2068.0px;top:305.8px;font-size:18px;line-height:18px;color:#1f6b3f;font-weight:bold;font-style:normal;letter-spacing:0;">PROPERTIES</div>
<div class="t" style="left:2068.0px;top:339.4px;font-size:18px;line-height:18px;color:#333;font-weight:normal;font-style:normal;">Name</div>
<div class="r" style="left:2068px;top:364px;width:364px;height:36px;background:#fafafa;border:1.5px solid #ababab;box-sizing:border-box;"></div>
<div class="t" style="left:2077.5px;top:374.6px;font-size:18px;line-height:18px;color:#8a8a8a;font-weight:normal;font-style:normal;">UEFAChamps</div>
<div class="t" style="left:2068.0px;top:416.9px;font-size:19px;line-height:19px;color:#3f78c4;font-weight:normal;font-style:normal;">All Properties</div>
<svg class="r" style="left:2044px;top:474px;" width="16" height="16" viewBox="0 0 16 16"><path d="M2 14 L14 14 L14 2 Z" fill="#555"/></svg>
<div class="t" style="left:2068.0px;top:475.3px;font-size:18px;line-height:18px;color:#1f6b3f;font-weight:bold;font-style:normal;letter-spacing:0;">APPLIED STEPS</div>
<div class="r" style="left:2068px;top:506px;width:364px;height:174px;background:#fdfdfd;border:1.5px solid #9a9a9a;box-sizing:border-box;"></div>
<div class="r" style="left:2069px;top:574.5px;width:362px;height:32.0px;background:#dcebe3;"></div>
<div class="t" style="left:2103.0px;top:515.6px;font-size:19px;line-height:19px;color:#333;font-weight:normal;font-style:normal;-webkit-text-stroke:0.25px #fdfdfd;">Source</div>
<svg class="r" style="left:2398px;top:515px;" width="20" height="19" viewBox="0 0 20 19"><g transform="translate(10,9.5)"><circle r="5.6" fill="none" stroke="#c0c0c0" stroke-width="2.6"/><g fill="#c0c0c0"><rect x="-1.6" y="-9.5" width="3.2" height="4" transform="rotate(0)"/><rect x="-1.6" y="-9.5" width="3.2" height="4" transform="rotate(45)"/><rect x="-1.6" y="-9.5" width="3.2" height="4" transform="rotate(90)"/><rect x="-1.6" y="-9.5" width="3.2" height="4" transform="rotate(135)"/><rect x="-1.6" y="-9.5" width="3.2" height="4" transform="rotate(180)"/><rect x="-1.6" y="-9.5" width="3.2" height="4" transform="rotate(225)"/><rect x="-1.6" y="-9.5" width="3.2" height="4" transform="rotate(270)"/><rect x="-1.6" y="-9.5" width="3.2" height="4" transform="rotate(315)"/></g></g></svg>
<div class="t" style="left:2103.0px;top:549.9px;font-size:19px;line-height:19px;color:#3a3a3a;font-weight:normal;font-style:normal;-webkit-text-stroke:0.25px #fdfdfd;">Navigation</div>
<svg class="r" style="left:2398px;top:548px;" width="20" height="19" viewBox="0 0 20 19"><g transform="translate(10,9.5)"><circle r="5.6" fill="none" stroke="#c0c0c0" stroke-width="2.6"/><g fill="#c0c0c0"><rect x="-1.6" y="-9.5" width="3.2" height="4" transform="rotate(0)"/><rect x="-1.6" y="-9.5" width="3.2" height="4" transform="rotate(45)"/><rect x="-1.6" y="-9.5" width="3.2" height="4" transform="rotate(90)"/><rect x="-1.6" y="-9.5" width="3.2" height="4" transform="rotate(135)"/><rect x="-1.6" y="-9.5" width="3.2" height="4" transform="rotate(180)"/><rect x="-1.6" y="-9.5" width="3.2" height="4" transform="rotate(225)"/><rect x="-1.6" y="-9.5" width="3.2" height="4" transform="rotate(270)"/><rect x="-1.6" y="-9.5" width="3.2" height="4" transform="rotate(315)"/></g></g></svg>
<div class="t" style="left:2102.6px;top:582.3px;font-size:19px;line-height:19px;color:#4a4a4a;font-weight:normal;font-style:normal;-webkit-text-stroke:0.25px #dcebe3;">Changed Type</div>
<svg class="r" style="left:2076px;top:582px;" width="20" height="18" viewBox="0 0 20 18"><path d="M3 2.5 L17 15.5 M17 2.5 L3 15.5" stroke="#666" stroke-width="2"/></svg>
<div class="r" style="left:267px;top:219px;width:1754px;height:172px;background:#ffffff;border:1px solid #acacac;box-sizing:border-box;"></div>
<div class="t" style="left:281.0px;top:235.2px;font-size:18.333px;line-height:18.333px;color:#383838;font-weight:normal;font-style:normal;font-family:'Liberation Mono',monospace;letter-spacing:0;"><span style="color:#777">= </span><span style="color:#383838">Table.TransformColumnTypes(Data2,{</span><span style="color:#383838">{</span><span style="color:#a84444">"Column1"</span><span style="color:#383838">, </span><span style="color:#3442cc">type</span> <span style="color:#32888f">text</span><span style="color:#383838">}</span><span style="color:#383838">, </span><span style="color:#383838">{</span><span style="color:#a84444">"Column2"</span><span style="color:#383838">, </span><span style="color:#3442cc">type</span> <span style="color:#32888f">text</span><span style="color:#383838">}</span><span style="color:#383838">, </span><span style="color:#383838">{</span><span style="color:#a84444">"Column3"</span><span style="color:#383838">, </span><span style="color:#3442cc">type</span> <span style="color:#32888f">text</span><span style="color:#383838">}</span><span style="color:#383838">, </span><span style="color:#383838">{</span><span style="color:#a84444">"Column4"</span><span style="color:#383838">, </span><span style="color:#3442cc">type</span> <span style="color:#32888f">text</span><span style="color:#383838">}</span><span style="color:#383838">, </span><span style="color:#383838">{</span><span style="color:#a84444">"Column5"</span><span style="color:#383838">, </span><span style="color:#3442cc">type</span></div>
<div class="t" style="left:281.0px;top:265.2px;font-size:18.333px;line-height:18.333px;color:#383838;font-weight:normal;font-style:normal;font-family:'Liberation Mono',monospace;letter-spacing:0;">    <span style="color:#32888f">text</span><span style="color:#383838">}, </span><span style="color:#383838">{</span><span style="color:#a84444">"Column6"</span><span style="color:#383838">, </span><span style="color:#3442cc">type</span> <span style="color:#32888f">text</span><span style="color:#383838">}</span><span style="color:#383838">, </span><span style="color:#383838">{</span><span style="color:#a84444">"Column7"</span><span style="color:#383838">, </span><span style="color:#3442cc">type</span> <span style="color:#32888f">text</span><span style="color:#383838">}</span><span style="color:#383838">, </span><span style="color:#383838">{</span><span style="color:#a84444">"Column8"</span><span style="color:#383838">, </span><span style="color:#3442cc">type</span> <span style="color:#32888f">text</span><span style="color:#383838">}</span><span style="color:#383838">, </span><span style="color:#383838">{</span><span style="color:#a84444">"Column9"</span><span style="color:#383838">, </span><span style="color:#3442cc">type</span> <span style="color:#32888f">text</span><span style="color:#383838">}</span><span style="color:#383838">, </span><span style="color:#383838">{</span><span style="color:#a84444">"Column10"</span><span style="color:#383838">, </span><span style="color:#3442cc">type</span> <span style="color:#32888f">text</span><span style="color:#383838">}</span><span style="color:#383838">, </span><span style="color:#383838">{</span><span style="color:#a84444">"Column11"</span><span style="color:#383838">, </span><span style="color:#3442cc">type</span></div>
<div class="t" style="left:281.0px;top:295.1px;font-size:18.333px;line-height:18.333px;color:#383838;font-weight:normal;font-style:normal;font-family:'Liberation Mono',monospace;letter-spacing:0;">    <span style="color:#32888f">text</span><span style="color:#383838">}, </span><span style="color:#383838">{</span><span style="color:#a84444">"Column12"</span><span style="color:#383838">, </span><span style="color:#3442cc">type</span> <span style="color:#32888f">text</span><span style="color:#383838">}})</span></div>
<div class="r" style="left:1961px;top:227px;width:23px;height:114px;background:#c8c8c8;"></div>
<svg class="r" style="left:0;top:0;" width="2470" height="654">
<defs><filter id="bl" x="-10%" y="-50%" width="120%" height="200%"><feGaussianBlur stdDeviation="2.2"/></filter>
<mask id="m"><rect width="2470" height="654" fill="#fff"/><g filter="url(#bl)" fill="#000"><rect x="253" y="208" width="1808" height="193.5"/><rect x="2049" y="554.5" width="399" height="67"/></g></mask></defs>
<rect width="2470" height="654" fill="rgba(0,0,0,0.455)" mask="url(#m)"/></svg>
<svg class="r" style="left:1988px;top:234px;" width="28" height="18" viewBox="0 0 28 18"><polyline points="4.3,14.3 12.6,5.4 20.8,14.3" fill="none" stroke="#2e7d4f" stroke-width="2.6"/></svg>
<svg class="r" style="left:1995px;top:240px;" width="72" height="108" viewBox="0 0 72 108"><path d="M7 8 L7 93 L27 75 L39 101 L50 96.5 L39 70 L65.5 70 Z" fill="#fff" stroke="#000" stroke-width="5" stroke-linejoin="miter"/></svg>
</body></html>
